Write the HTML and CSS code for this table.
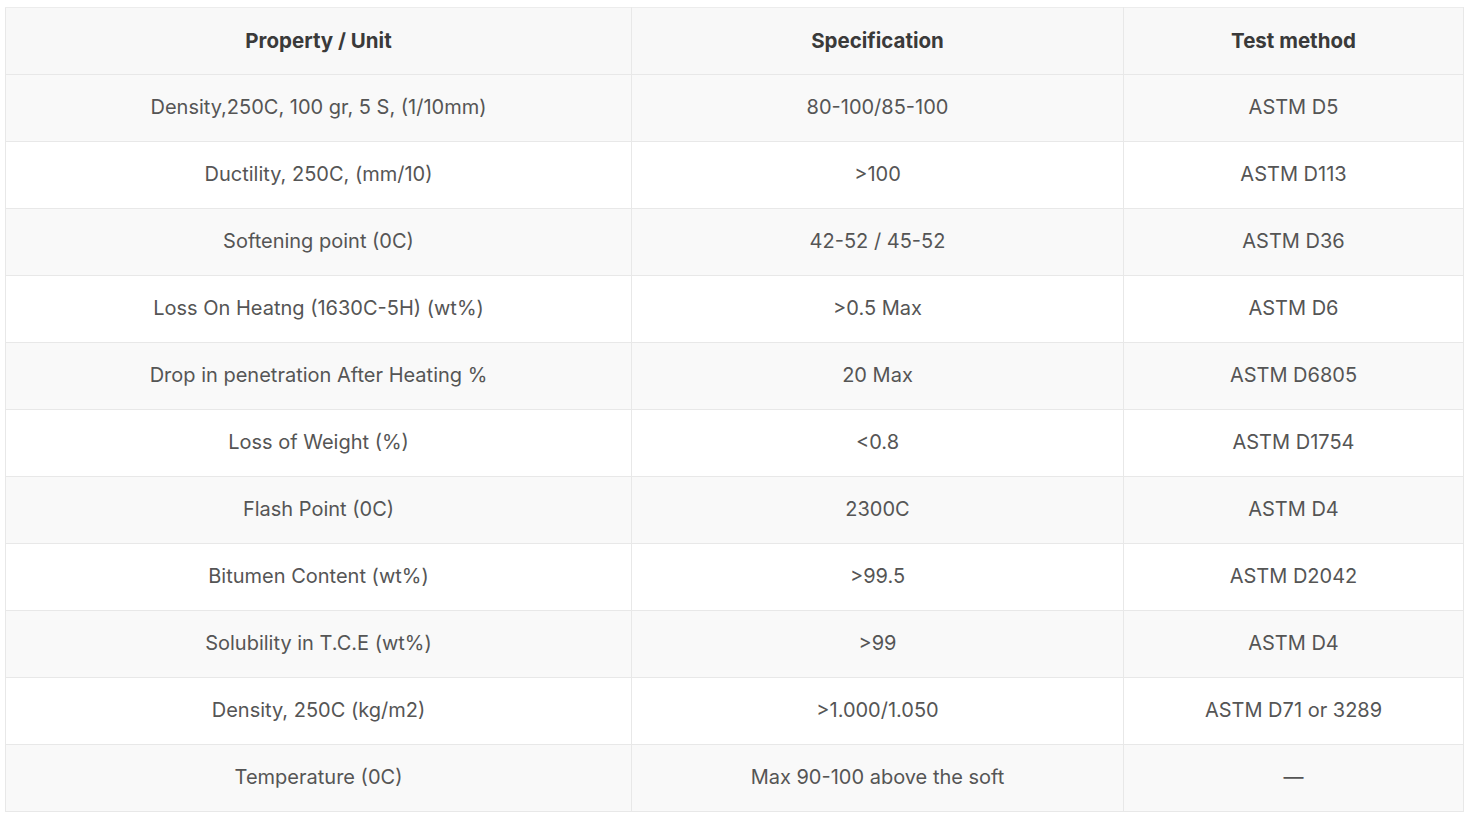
FILE: index.html
```html
<!DOCTYPE html>
<html>
<head>
<meta charset="utf-8">
<link rel="stylesheet" href="styles.css">
</head>
<body>
<div class="wrap">
<table class="spec">
<thead>
<tr><th class="c1">Property / Unit</th><th class="c2">Specification</th><th class="c3">Test method</th></tr>
</thead>
<tbody>
<tr><td>Density,250C, 100 gr, 5 S, (1/10mm)</td><td>80-100/85-100</td><td>ASTM D5</td></tr>
<tr><td>Ductility, 250C, (mm/10)</td><td>&gt;100</td><td>ASTM D113</td></tr>
<tr><td>Softening point (0C)</td><td>42-52 / 45-52</td><td>ASTM D36</td></tr>
<tr><td>Loss On Heatng (1630C-5H) (wt%)</td><td>&gt;0.5 Max</td><td>ASTM D6</td></tr>
<tr><td>Drop in penetration After Heating %</td><td>20 Max</td><td>ASTM D6805</td></tr>
<tr><td>Loss of Weight (%)</td><td>&lt;0.8</td><td>ASTM D1754</td></tr>
<tr><td>Flash Point (0C)</td><td>2300C</td><td>ASTM D4</td></tr>
<tr><td>Bitumen Content (wt%)</td><td>&gt;99.5</td><td>ASTM D2042</td></tr>
<tr><td>Solubility in T.C.E (wt%)</td><td>&gt;99</td><td>ASTM D4</td></tr>
<tr><td>Density, 250C (kg/m2)</td><td>&gt;1.000/1.050</td><td>ASTM D71 or 3289</td></tr>
<tr><td>Temperature (0C)</td><td>Max 90-100 above the soft</td><td>—</td></tr>
</tbody>
</table>
</div>
</body>
</html>
```
FILE: styles.css
```css
html, body { margin: 0; padding: 0; background: #fff; }
.wrap { padding: 7px 11px 0 5px; }
.spec {
  width: 1459px;
  border-collapse: collapse;
  font-family: Inter, "Liberation Sans", sans-serif;
  table-layout: fixed;
  border: 1px solid #ececec;
}
.spec .c1 { width: 625px; }
.spec .c2 { width: 491px; }
.spec .c3 { width: auto; }
.spec th, .spec td {
  height: 64px;
  padding: 0 0 2px 0;
  text-align: center;
  vertical-align: middle;
  border: 1px solid #e8e8e8;
  border-top: none;
}
.spec th {
  font-weight: 700;
  font-size: 20.5px;
  color: #3a3a3a;
  background: #f8f8f8;
  border-top: 1px solid #ececec;
}
.spec td {
  font-size: 20px;
  font-weight: 400;
  color: #555;
}
.spec tbody tr:nth-child(odd) td { background: #f9f9f9; }
.spec tbody tr:nth-child(even) td { background: #fff; }
```
